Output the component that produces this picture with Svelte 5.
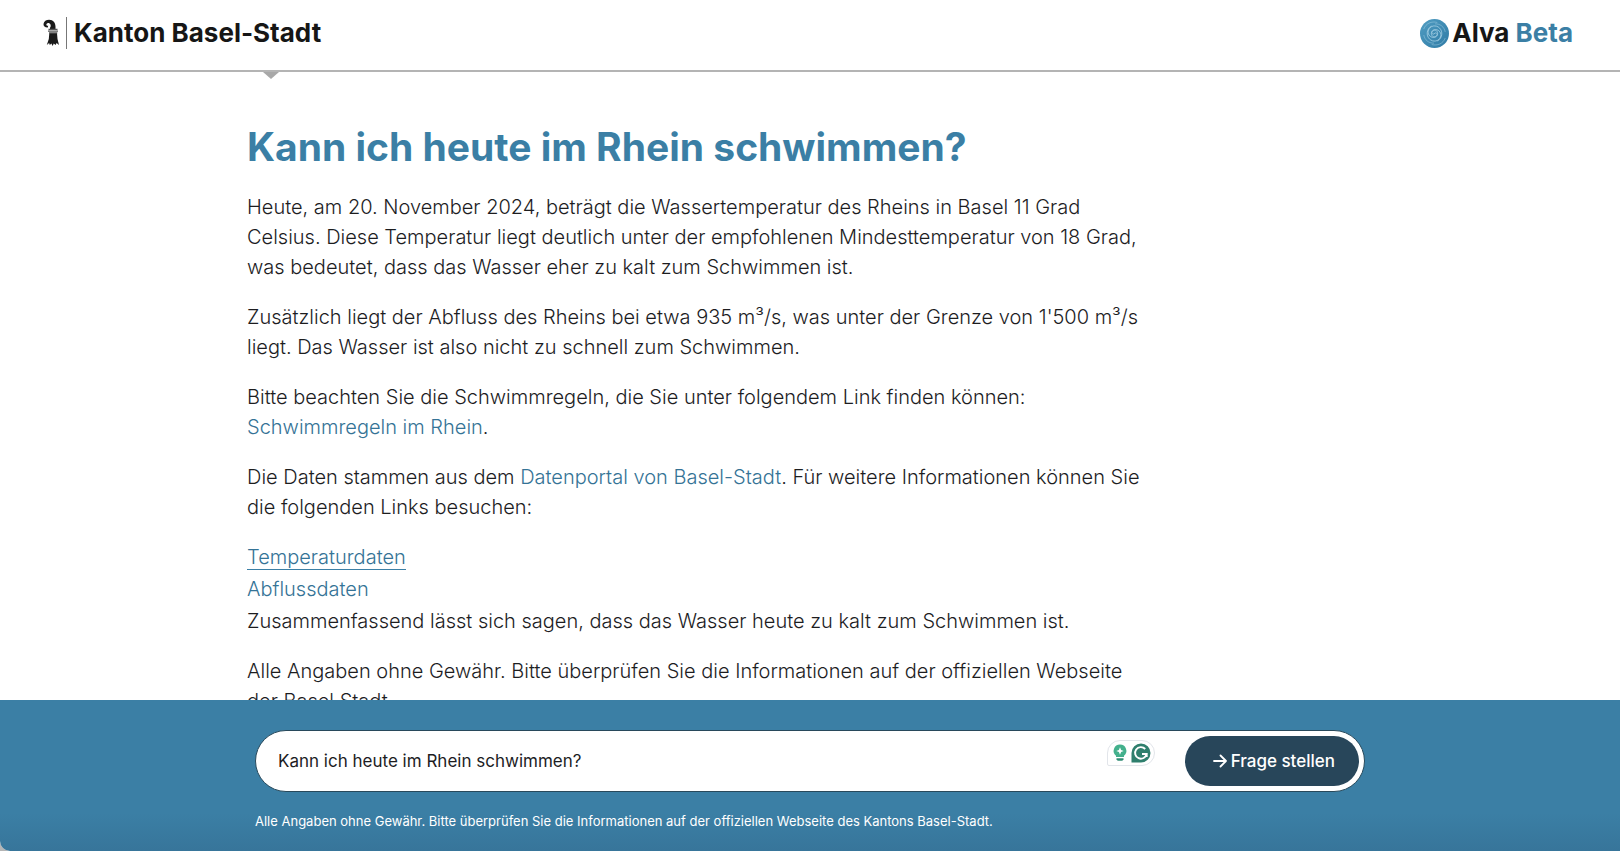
<script>
  let question = $state('Kann ich heute im Rhein schwimmen?');

  function handleSubmit(e) {
    e.preventDefault();
  }
</script>

<div class="page">
  <header class="header">
    <a class="brand" href="#start">
      <svg class="staff" width="16" height="28" viewBox="0 0 16 28" aria-hidden="true">
        <path d="M4.800 8.600C2.200 8.800 .3 7.200 .5 5.100C.8 2.200 3.200 .7 6.100 .7C10.300 .7 12.500 3.800 12.500 7.600V11H7V8.800C8.700 6.500 7.200 3.700 5 3.900C3.200 4.100 2.900 6 4 6.700C4.700 7.100 5.400 6.700 5.300 6" fill="#1a1a1a" />
        <path d="M5.500 10.300H14.500M5 12.200H15M6 13.800H14.300" stroke="#555" stroke-width="1.200" />
        <path d="M6.300 14.200H14L14.500 20L16 26L13.600 24L12.600 26L10.800 24.600L9.600 27L8.400 24.600L6.800 26L6.100 24L3.800 26L5.800 20Z" fill="#1a1a1a" />
      </svg>
      <span class="divider"></span>
      <span>Kanton Basel-Stadt</span>
    </a>
    <a class="brand" href="#alva">
      <svg class="swirl" width="29" height="29" viewBox="0 0 30 30" aria-hidden="true">
        <defs>
          <linearGradient id="disc" x1="0" y1="0" x2="1" y2="1">
            <stop offset="0" stop-color="#519dc2" />
            <stop offset="1" stop-color="#2f7ba5" />
          </linearGradient>
        </defs>
        <circle cx="15" cy="15" r="15" fill="url(#disc)" />
        <g fill="none" stroke="#a9d3e6" stroke-width=".8" stroke-linecap="round">
          <path d="M15 15c1-1.500 3-.5 2.700 1.300c-.4 2.600-3.800 3-5.200 1c-2-3 .3-6.300 3.700-6.300c4 0 6.300 4 5 7.600c-1.700 4.700-7.800 5.600-11.300 2.200c-4-4-3-10.600 1.700-13.300" />
          <path d="M15 15c-1 1.500-3 .5-2.700-1.300c.4-2.600 3.800-3 5.200-1c2 3-.3 6.300-3.700 6.300c-4 0-6.300-4-5-7.600c1.700-4.700 7.800-5.600 11.300-2.200c4 4 3 10.600-1.700 13.300" />
          <path d="M4 10c2-5.500 8-8 13.500-6.500M26 20c-2 5.500-8 8-13.500 6.500M4 17c1 5 5 8 10 8M26 13c-1-5-5-8-10-8" opacity=".6" />
        </g>
      </svg>
      <span>Alva <span class="beta">Beta</span></span>
    </a>
  </header>

  <main class="main">
    <svg class="pointer" width="16" height="7" viewBox="0 0 16 7" aria-hidden="true">
      <path d="M0 0H16L8 7Z" fill="#a8a8a8" />
    </svg>
    <article class="answer">
      <h1>Kann ich heute im Rhein schwimmen?</h1>
      <p>
        Heute, am 20. November 2024, beträgt die Wassertemperatur des Rheins in Basel 11 Grad
        Celsius. Diese Temperatur liegt deutlich unter der empfohlenen Mindesttemperatur von 18
        Grad, was bedeutet, dass das Wasser eher zu kalt zum Schwimmen ist.
      </p>
      <p>
        Zusätzlich liegt der Abfluss des Rheins bei etwa 935 m³/s, was unter der Grenze von
        1'500 m³/s liegt. Das Wasser ist also nicht zu schnell zum Schwimmen.
      </p>
      <p>
        Bitte beachten Sie die Schwimmregeln, die Sie unter folgendem Link finden können:
        <a href="#schwimmregeln">Schwimmregeln im Rhein</a>.
      </p>
      <p>
        Die Daten stammen aus dem <a href="#datenportal">Datenportal von Basel-Stadt</a>. Für
        weitere Informationen können Sie die folgenden Links besuchen:
      </p>
      <ul>
        <li><a class="underlined" href="#temperatur">Temperaturdaten</a></li>
        <li><a href="#abfluss">Abflussdaten</a></li>
      </ul>
      <p>Zusammenfassend lässt sich sagen, dass das Wasser heute zu kalt zum Schwimmen ist.</p>
      <p>
        Alle Angaben ohne Gewähr. Bitte überprüfen Sie die Informationen auf der offiziellen
        Webseite der Basel Stadt.
      </p>
    </article>
  </main>

  <footer class="footer">
    <div class="footer-inner">
      <form class="ask" onsubmit={handleSubmit}>
        <input type="text" aria-label="Ihre Frage" bind:value={question} />
        <span class="checker">
          <svg width="16" height="20" viewBox="0 0 16 20" aria-hidden="true">
            <path d="M8 1.500a6.300 6.300 0 0 0-4 11.200V14h8v-1.300A6.300 6.300 0 0 0 8 1.500Z" fill="#43b08c" />
            <path d="M8 4.300L9.100 6.900L11.700 8L9.100 9.100L8 11.700L6.900 9.100L4.300 8L6.900 6.900Z" fill="#fff" />
            <path d="M4.500 15.200h7v1.300l-1.200 1.200H5.700l-1.200-1.200Z" fill="#2f8c73" />
          </svg>
          <svg width="20" height="20" viewBox="0 0 20 20" aria-hidden="true">
            <path d="M10 .5A9.500 9.500 0 1 1 10 19.500H.5V10A9.500 9.500 0 0 1 10 .5Z" fill="#2f7f6d" />
            <path d="M14.200 6A5.800 5.800 0 1 0 15.600 11H11M15.700 10.800V14" fill="none" stroke="#fff" stroke-width="1.900" />
          </svg>
        </span>
        <button type="submit">
          <svg width="14" height="14" viewBox="0 0 14 14" fill="none" stroke="currentColor" stroke-width="1.800" stroke-linecap="round" stroke-linejoin="round" aria-hidden="true">
            <path d="M1 7H13M7.500 1.500L13 7L7.500 12.500" />
          </svg>
          <span>Frage stellen</span>
        </button>
      </form>
      <p class="note">
        Alle Angaben ohne Gewähr. Bitte überprüfen Sie die Informationen auf der offiziellen
        Webseite des Kantons Basel-Stadt.
      </p>
    </div>
  </footer>
</div>

<style>
  :global(body) {
    margin: 0;
    background: #b5b5b5;
  }

  .page {
    display: flex;
    flex-direction: column;
    height: 100vh;
    overflow: hidden;
    border-bottom-left-radius: 10px;
    background: #fff;
    color: #1d1d1f;
    font-family: Inter, 'Liberation Sans', sans-serif;
    font-size: 20px;
    line-height: 30px;
  }

  a {
    color: #357396;
    text-decoration: none;
  }

  .header {
    display: flex;
    justify-content: space-between;
    align-items: center;
    padding: 15px 47px 19px 43px;
    border-bottom: 2px solid #b4b4b4;
  }

  .brand {
    display: flex;
    align-items: center;
    color: #161616;
    font-size: 26px;
    font-weight: 700;
    line-height: 36px;
  }

  .divider {
    width: 1px;
    height: 32px;
    margin: 0 7px;
    background: #777;
  }

  .swirl {
    margin-right: 3px;
  }

  .beta {
    color: #3b7fa5;
  }

  .main {
    flex: 1;
    min-height: 0;
    box-sizing: border-box;
    width: 100%;
    max-width: 1126px;
    margin: 0 auto;
    overflow-y: auto;
    scrollbar-width: none;
  }

  .pointer {
    display: block;
    margin-left: 16px;
  }

  .answer {
    max-width: 900px;
    padding-top: 43px;
    font-weight: 300;
  }

  h1 {
    margin: 0 0 20px;
    color: #3b7fa5;
    font-size: 39px;
    font-weight: 700;
    line-height: 50px;
  }

  p {
    margin: 0 0 20px;
  }

  ul {
    margin: 0;
    padding: 0;
    list-style: none;
  }

  li {
    line-height: 30px;
    padding-bottom: 2px;
  }

  .underlined {
    border-bottom: 1px solid #3b7fa5;
  }

  .footer {
    padding: 30px 0 20px;
    background: linear-gradient(#3b7fa5 75%, #37759a);
  }

  .footer-inner {
    max-width: 1110px;
    margin: 0 auto;
  }

  .ask {
    display: flex;
    align-items: center;
    padding: 5px;
    border: 1px solid #28495b;
    border-radius: 32px;
    background: #fff;
  }

  input {
    flex: 1;
    min-width: 0;
    padding: 0 17px;
    border: 0;
    outline: 0;
    background: none;
    color: #1d1d1f;
    font: inherit;
    font-size: 17px;
  }

  .checker {
    display: flex;
    align-items: center;
    align-self: flex-start;
    gap: 3px;
    margin: 4px 30px 0 0;
    padding: 2px 3px 2px 4px;
    border: 1px solid #e2e5ea;
    border-radius: 13px 13px 13px 2px;
  }

  button {
    display: flex;
    align-items: center;
    gap: 4px;
    padding: 0 24px 0 28px;
    border: 0;
    border-radius: 25px;
    background: #28465a;
    color: #fff;
    font: inherit;
    font-size: 17px;
    font-weight: 500;
    line-height: 50px;
    cursor: pointer;
  }

  .note {
    margin: 19px 0 0;
    color: #fff;
    font-size: 13px;
    line-height: 20px;
  }
</style>
